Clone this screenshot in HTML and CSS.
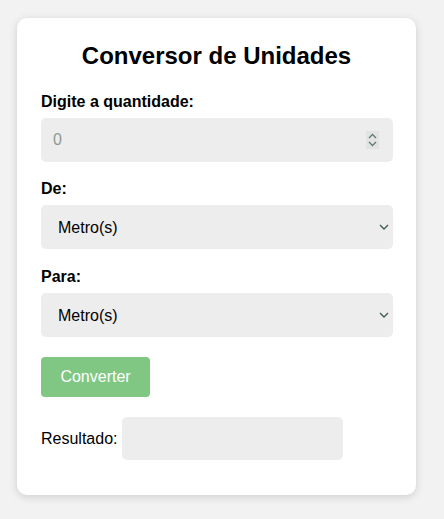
FILE: index.html
```html
<!DOCTYPE html>
<html lang="pt">
<head>
<meta charset="utf-8">
<title>Conversor de Unidades</title>
<link rel="stylesheet" href="styles.css">
</head>
<body>
<div class="card">
  <h2 class="title">Conversor de Unidades</h2>
  <label class="label" for="quantidade">Digite a quantidade:</label>
  <div class="number-wrap">
    <input class="field" id="quantidade" type="text" placeholder="0">
    <span class="spinner" aria-hidden="true">
      <svg width="9" height="14" viewBox="0 0 9 14"><path d="M1 5 L4.5 1.5 L8 5" fill="none" stroke="#5a7f72" stroke-width="1.3"/><path d="M1 9 L4.5 12.5 L8 9" fill="none" stroke="#5a7f72" stroke-width="1.3"/></svg>
    </span>
  </div>
  <label class="label" for="de">De:</label>
  <select class="field select" id="de">
    <option>Metro(s)</option>
  </select>
  <label class="label" for="para">Para:</label>
  <select class="field select select-last" id="para">
    <option>Metro(s)</option>
  </select>
  <button class="btn" type="button">Converter</button>
  <div class="result">
    <span class="result-label">Resultado:</span>
    <span class="result-box"></span>
  </div>
</div>
</body>
</html>
```

FILE: styles.css
```css
html, body {
  margin: 0;
  padding: 0;
}
body {
  background: #f2f2f2;
  font-family: "Liberation Sans", Arial, sans-serif;
  color: #000;
  padding-top: 18px;
  min-height: 519px;
  box-sizing: border-box;
}
.card {
  width: 399px;
  box-sizing: border-box;
  margin-left: 17px;
  background: #fff;
  border-radius: 10px;
  box-shadow: 0 2px 8px rgba(0, 0, 0, 0.15);
  padding: 24px 24px 35px 24px;
  display: flex;
  flex-direction: column;
}
.title {
  margin: 0 0 23px 0;
  font-size: 24px;
  font-weight: bold;
  text-align: center;
  line-height: 28px;
}
.label {
  display: block;
  font-size: 16px;
  font-weight: bold;
  line-height: 18px;
  margin-bottom: 7px;
}
.number-wrap {
  position: relative;
  margin-bottom: 18px;
}
.field {
  display: block;
  width: 352px;
  height: 44px;
  box-sizing: border-box;
  border: none;
  border-radius: 5px;
  background: #ededed;
  padding: 0 12px;
  font-family: "Liberation Sans", Arial, sans-serif;
  font-size: 16px;
  color: #000;
  outline: none;
}
.number-wrap .field {
  margin: 0;
}
.field::placeholder {
  color: #8c9a8c;
}
.spinner {
  position: absolute;
  right: 13px;
  top: 13px;
  width: 13px;
  height: 18px;
  background: #e3e3e3;
  display: flex;
  align-items: center;
  justify-content: center;
}
.select {
  -webkit-appearance: none;
  appearance: none;
  padding-left: 17px;
  background-color: #ededed;
  background-image: url("data:image/svg+xml;utf8,<svg xmlns='http://www.w3.org/2000/svg' width='10' height='6' viewBox='0 0 10 6'><path d='M1 1 L5 5 L9 1' fill='none' stroke='%23405f52' stroke-width='1.4'/></svg>");
  background-repeat: no-repeat;
  background-position: right 4px center;
  margin-bottom: 19px;
}
.select-last {
  margin-bottom: 20px;
}
.btn {
  align-self: flex-start;
  width: 109px;
  height: 40px;
  border: none;
  border-radius: 4px;
  background: #81c784;
  color: #fff;
  font-family: "Liberation Sans", Arial, sans-serif;
  font-size: 16px;
  padding: 0;
  margin: 0 0 20px 0;
}
.result {
  display: flex;
  align-items: center;
  gap: 4px;
  font-size: 16px;
}
.result-box {
  display: block;
  width: 221px;
  height: 43px;
  background: #ededed;
  border-radius: 5px;
}
```
